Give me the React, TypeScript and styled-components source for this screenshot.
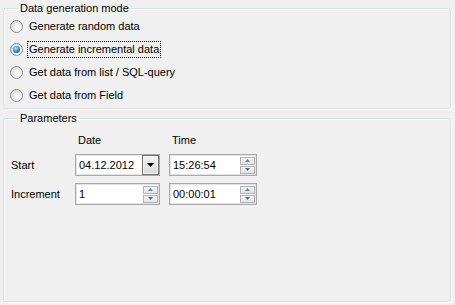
import styled, { createGlobalStyle } from "styled-components";

interface CheckProps {
  $checked?: boolean;
}

interface FocusProps {
  $focused?: boolean;
}

interface GroupProps {
  $height: number;
  $gap?: number;
}

const GlobalStyle = createGlobalStyle`
  html, body {
    margin: 0;
    padding: 0;
    background: #f0f0f0;
  }
  body {
    font-family: "Liberation Sans", Arial, sans-serif;
    font-size: 11px;
    color: #000;
  }
`;

const Page = styled.div`
  width: 455px;
  height: 305px;
  box-sizing: border-box;
  padding: 2px 4px 0 3px;
  background: #f0f0f0;
  overflow: hidden;
`;

const GroupBox = styled.fieldset<GroupProps>`
  box-sizing: border-box;
  height: ${(props) => props.$height}px;
  margin: ${(props) => props.$gap || 0}px 0 0 0;
  padding: 0 0 0 6px;
  border: 1px solid #d5dfe5;
  border-radius: 3px;
  box-shadow: inset 1px 1px 0 #fff, 1px 1px 0 #fff;
  min-width: 0;
`;

const Legend = styled.legend`
  margin-left: 7px;
  padding: 0 3px;
  line-height: 13px;
  font-size: 11px;
`;

const RadioList = styled.div`
  display: flex;
  flex-direction: column;
`;

const RadioRow = styled.div`
  display: flex;
  align-items: center;
  height: 23px;
  gap: 4px;
`;

const RadioDot = styled.span<CheckProps>`
  position: relative;
  flex: none;
  width: 13px;
  height: 13px;
  box-sizing: border-box;
  border-radius: 50%;
  border: 1px solid #8e8f8f;
  background: radial-gradient(
    circle at 65% 65%,
    #ffffff 0%,
    #ececec 45%,
    #c9c9c9 100%
  );

  &::after {
    content: "";
    display: ${(props) => (props.$checked ? "block" : "none")};
    position: absolute;
    left: 2px;
    top: 2px;
    width: 7px;
    height: 7px;
    border-radius: 50%;
    background: radial-gradient(
      circle at 40% 35%,
      #bfe6fb 0%,
      #3d93cf 45%,
      #0d3f7a 100%
    );
  }
`;

const RadioLabel = styled.span<FocusProps>`
  padding: 1px 1px;
  line-height: 13px;
  white-space: nowrap;
  border: 1px dotted ${(props) => (props.$focused ? "#000" : "transparent")};
`;

const ParamGrid = styled.div`
  display: grid;
  grid-template-columns: 55px 85px 88px;
  column-gap: 9px;
  row-gap: 7px;
  align-items: center;
  padding: 8px 0 0 1px;
`;

const ColHeader = styled.div`
  padding-left: 3px;
  line-height: 14px;
`;

const RowLabel = styled.div`
  line-height: 14px;
  white-space: nowrap;
`;

const Field = styled.div`
  display: flex;
  align-items: center;
  box-sizing: border-box;
  height: 22px;
  padding: 0 1px 0 3px;
  background: #fff;
  border: 1px solid #a9a9a9;
  box-shadow: inset 0 0 0 1px #e4e4e4;
`;

const FieldText = styled.span`
  flex: 1;
  line-height: 14px;
`;

const DropButton = styled.div`
  display: flex;
  align-items: center;
  justify-content: center;
  width: 17px;
  height: 20px;
  box-sizing: border-box;
  margin-right: -1px;
  border: 1px solid #6f6f6f;
  box-shadow: inset 0 0 0 1px #f6f6f6;
  background: linear-gradient(#f2f2f2, #d9d9d9);
`;

const SpinStack = styled.div`
  display: flex;
  flex-direction: column;
  gap: 1px;
`;

const SpinButton = styled.div`
  display: flex;
  align-items: center;
  justify-content: center;
  width: 15px;
  height: 8px;
  box-sizing: border-box;
  border: 1px solid #b3b3b3;
  background: linear-gradient(#f7f7f7, #e2e2e2);
`;

const Spin = () => (
  <SpinStack>
    <SpinButton>
      <svg width="5" height="3" viewBox="0 0 5 3">
        <path d="M0 3 L2.5 0 L5 3 Z" fill="#5f82c4" />
      </svg>
    </SpinButton>
    <SpinButton>
      <svg width="5" height="3" viewBox="0 0 5 3">
        <path d="M0 0 L5 0 L2.5 3 Z" fill="#3f64b0" />
      </svg>
    </SpinButton>
  </SpinStack>
);

const modes = [
  "Generate random data",
  "Generate incremental data",
  "Get data from list / SQL-query",
  "Get data from Field",
];

const App = () => {
  const selected = 1;

  return (
    <Page>
      <GlobalStyle />
      <GroupBox $height={107}>
        <Legend>Data generation mode</Legend>
        <RadioList>
          {modes.map((mode, i) => (
            <RadioRow key={mode}>
              <RadioDot $checked={i === selected} />
              <RadioLabel $focused={i === selected}>{mode}</RadioLabel>
            </RadioRow>
          ))}
        </RadioList>
      </GroupBox>
      <GroupBox $height={190} $gap={3}>
        <Legend>Parameters</Legend>
        <ParamGrid>
          <div />
          <ColHeader>Date</ColHeader>
          <ColHeader>Time</ColHeader>

          <RowLabel>Start</RowLabel>
          <Field>
            <FieldText>04.12.2012</FieldText>
            <DropButton>
              <svg width="7" height="4" viewBox="0 0 7 4">
                <path d="M0 0 L7 0 L3.5 4 Z" fill="#000" />
              </svg>
            </DropButton>
          </Field>
          <Field>
            <FieldText>15:26:54</FieldText>
            <Spin />
          </Field>

          <RowLabel>Increment</RowLabel>
          <Field>
            <FieldText>1</FieldText>
            <Spin />
          </Field>
          <Field>
            <FieldText>00:00:01</FieldText>
            <Spin />
          </Field>
        </ParamGrid>
      </GroupBox>
    </Page>
  );
};

export default App;
